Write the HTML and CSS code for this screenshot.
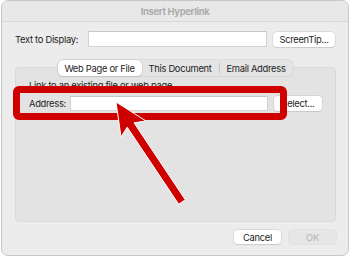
FILE: index.html
```html
<!DOCTYPE html>
<html>
<head>
<meta charset="utf-8">
<link rel="stylesheet" href="styles.css">
</head>
<body>
<div class="window">
  <div class="titlebar">Insert Hyperlink</div>
  <div class="row1">
    <span class="label display-label">Text to Display:</span>
    <span class="field display-field"></span>
    <span class="btn screentip">ScreenTip...</span>
  </div>
  <div class="tabs">
    <span class="tab selected">Web Page or File</span>
    <span class="tab">This Document</span>
    <span class="sep"></span>
    <span class="tab">Email Address</span>
  </div>
  <div class="group">
    <div class="hint">Link to an existing file or web page</div>
    <div class="addr-row">
      <span class="label addr-label">Address:</span>
      <span class="field addr-field"></span>
      <span class="btn select">Select...</span>
    </div>
  </div>
  <div class="footer">
    <span class="btn cancel">Cancel</span>
    <span class="btn ok">OK</span>
  </div>
  <div class="highlight"></div>
  <svg class="arrow" width="348" height="256" viewBox="0 0 348 256">
    <polygon points="116,102 146,121 134,122.8 185.3,199.8 178.7,204.2 127.2,127.2 121,137" fill="#cf0000" stroke="#ffffff" stroke-width="1" stroke-linejoin="miter"/>
  </svg>
</div>
</body>
</html>
```

FILE: styles.css
```css
* { box-sizing: border-box; }
html, body { margin: 0; padding: 0; background: #ffffff; }
body {
  font-family: Inter, "Noto Sans", "Liberation Sans", sans-serif;
  font-size: 9.4px;
  letter-spacing: -0.3px;
  color: #1e1e1e;
}
.window {
  position: relative;
  margin-left: 1px;
  width: 348px;
  height: 256px;
  border: 1px solid #c6c6c6;
  border-radius: 7px;
  background: #ececec;
  overflow: hidden;
}
.titlebar {
  height: 21px;
  border-bottom: 1px solid #d8d8d8;
  background: #e8e8e8;
  text-align: center;
  line-height: 21px;
  font-weight: 700;
  font-size: 9.4px;
  color: #ababab;
}
.row1 {
  display: flex;
  align-items: center;
  margin-top: 9px;
  padding-left: 13px;
}
.label { white-space: nowrap; }
.display-label { width: 73px; }
.field {
  display: block;
  height: 16px;
  background: #fff;
  border: 1px solid #d2d2d2;
  border-top-color: #c6c6c6;
}
.display-field { width: 179px; }
.btn {
  display: flex;
  align-items: center;
  justify-content: center;
  height: 15px;
  background: #fff;
  border-radius: 4px;
  box-shadow: 0 0 0 0.5px #c8c8c8, 0 1px 1px rgba(0,0,0,0.12);
  white-space: nowrap;
}
.screentip { width: 62px; margin-left: 6px; }
.tabs {
  position: relative;
  z-index: 1;
  display: flex;
  align-items: center;
  width: 235px;
  height: 16px;
  margin: 13px auto -9px;
  background: #e4e4e4;
  border-radius: 5px;
  box-shadow: 0 0 0 0.5px #cdcdcd;
}
.tab {
  display: flex;
  align-items: center;
  justify-content: center;
  height: 16px;
}
.tab.selected {
  width: 84px;
  background: #fff;
  border-radius: 5px;
  box-shadow: 0 0 0 0.5px #c4c4c4, 0 1px 1px rgba(0,0,0,0.12);
}
.tab:nth-child(2) { width: 77px; }
.tab:nth-child(4) { flex: 1; }
.sep { width: 1px; height: 10px; background: #c8c8c8; }
.group {
  margin: 0 12px 0 13px;
  height: 155px;
  background: #e3e3e3;
  border: 1px solid #d9d9d9;
  border-radius: 4px;
  padding: 11px 0 0 13px;
}
.hint { line-height: 13px; }
.addr-row {
  display: flex;
  align-items: center;
  margin-top: 4px;
}
.addr-label { width: 41px; }
.addr-field { width: 198px; height: 15px; }
.select { width: 48px; margin-left: 6px; }
.footer {
  display: flex;
  justify-content: flex-end;
  gap: 8px;
  margin-top: 8px;
  padding-right: 12px;
}
.cancel { width: 47px; height: 14px; }
.ok {
  width: 47px;
  height: 14px;
  background: #e6e6e6;
  color: #b5b5b5;
  box-shadow: 0 0 0 0.5px #d6d6d6;
}
.highlight {
  position: absolute;
  left: 11px;
  top: 85px;
  width: 274px;
  height: 34px;
  border: 7.5px solid #cf0000;
  border-radius: 6px;
  z-index: 2;
}
.arrow {
  position: absolute;
  left: -2px;
  top: -1px;
  z-index: 3;
}
```
